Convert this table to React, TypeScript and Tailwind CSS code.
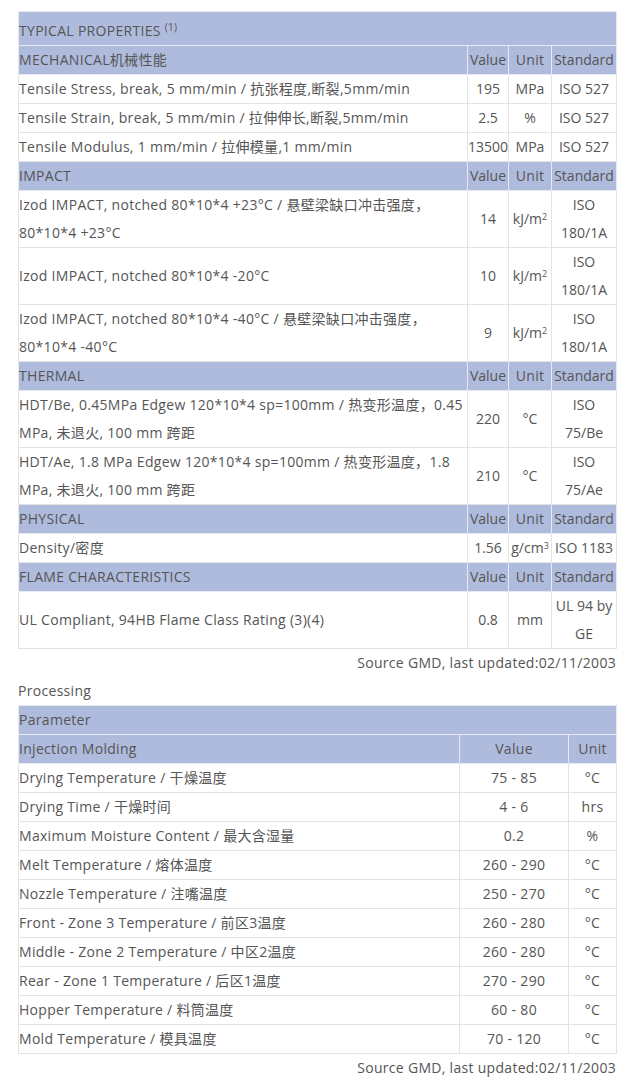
import React from "react";

type Row = { label: React.ReactNode; value: string; unit: React.ReactNode; standard: React.ReactNode };
type Section = { title: React.ReactNode; rows: Row[] };

const sections: Section[] = [
  {
    title: "MECHANICAL机械性能",
    rows: [
      { label: "Tensile Stress, break, 5 mm/min / 抗张程度,断裂,5mm/min", value: "195", unit: "MPa", standard: "ISO 527" },
      { label: "Tensile Strain, break, 5 mm/min / 拉伸伸长,断裂,5mm/min", value: "2.5", unit: "%", standard: "ISO 527" },
      { label: "Tensile Modulus, 1 mm/min / 拉伸模量,1 mm/min", value: "13500", unit: "MPa", standard: "ISO 527" },
    ],
  },
  {
    title: "IMPACT",
    rows: [
      {
        label: (<>Izod IMPACT, notched 80*10*4 +23°C / 悬壁梁缺口冲击强度，<br />80*10*4 +23°C</>),
        value: "14",
        unit: (<>kJ/m<sup className="text-[9px]">2</sup></>),
        standard: (<>ISO<br />180/1A</>),
      },
      {
        label: "Izod IMPACT, notched 80*10*4 -20°C",
        value: "10",
        unit: (<>kJ/m<sup className="text-[9px]">2</sup></>),
        standard: (<>ISO<br />180/1A</>),
      },
      {
        label: (<>Izod IMPACT, notched 80*10*4 -40°C / 悬壁梁缺口冲击强度，<br />80*10*4 -40°C</>),
        value: "9",
        unit: (<>kJ/m<sup className="text-[9px]">2</sup></>),
        standard: (<>ISO<br />180/1A</>),
      },
    ],
  },
  {
    title: "THERMAL",
    rows: [
      {
        label: (<>HDT/Be, 0.45MPa Edgew 120*10*4 sp=100mm / 热变形温度，0.45<br />MPa, 未退火, 100 mm 跨距</>),
        value: "220",
        unit: "°C",
        standard: (<>ISO<br />75/Be</>),
      },
      {
        label: (<>HDT/Ae, 1.8 MPa Edgew 120*10*4 sp=100mm / 热变形温度，1.8<br />MPa, 未退火, 100 mm 跨距</>),
        value: "210",
        unit: "°C",
        standard: (<>ISO<br />75/Ae</>),
      },
    ],
  },
  {
    title: "PHYSICAL",
    rows: [
      { label: "Density/密度", value: "1.56", unit: (<>g/cm<sup className="text-[9px]">3</sup></>), standard: "ISO 1183" },
    ],
  },
  {
    title: "FLAME CHARACTERISTICS",
    rows: [
      { label: "UL Compliant, 94HB Flame Class Rating (3)(4)", value: "0.8", unit: "mm", standard: (<>UL 94 by<br />GE</>) },
    ],
  },
];

const processing: [string, string, string][] = [
  ["Drying Temperature / 干燥温度", "75 - 85", "°C"],
  ["Drying Time / 干燥时间", "4 - 6", "hrs"],
  ["Maximum Moisture Content / 最大含湿量", "0.2", "%"],
  ["Melt Temperature / 熔体温度", "260 - 290", "°C"],
  ["Nozzle Temperature / 注嘴温度", "250 - 270", "°C"],
  ["Front - Zone 3 Temperature / 前区3温度", "260 - 280", "°C"],
  ["Middle - Zone 2 Temperature / 中区2温度", "260 - 280", "°C"],
  ["Rear - Zone 1 Temperature / 后区1温度", "270 - 290", "°C"],
  ["Hopper Temperature / 料筒温度", "60 - 80", "°C"],
  ["Mold Temperature / 模具温度", "70 - 120", "°C"],
];

const head = "bg-[#afbbdc] border border-[#e6e9f2] p-0 font-normal";
const cell = "border border-[#e3e3e3] p-0";

export default function App() {
  return (
    <div
      className="pl-[18px] pr-[1px] pt-[11px] text-[14px] leading-[28px] tracking-[0.3px] text-[#555]"
      style={{ fontFamily: '"Open Sans", "Noto Sans CJK SC", sans-serif' }}
    >
      <table className="w-[598px] table-fixed border-collapse border border-[#222]">
        <colgroup>
          <col className="w-[449px]" />
          <col className="w-[41px]" />
          <col className="w-[43px]" />
          <col className="w-[65px]" />
        </colgroup>
        <tbody>
          <tr>
            <td colSpan={4} className={`${head} text-left pt-[5px]`}>
              TYPICAL PROPERTIES <sup className="text-[10px]">(1)</sup>
            </td>
          </tr>
          {sections.map((s, i) => (
            <React.Fragment key={i}>
              <tr>
                <td className={`${head} text-left`}>{s.title}</td>
                <td className={`${head} text-center tracking-normal`}>Value</td>
                <td className={`${head} text-center`}>Unit</td>
                <td className={`${head} text-center tracking-normal`}>Standard</td>
              </tr>
              {s.rows.map((r, j) => (
                <tr key={j}>
                  <td className={`${cell} text-left align-middle`}>{r.label}</td>
                  <td className={`${cell} text-center align-middle tracking-normal`}>{r.value}</td>
                  <td className={`${cell} text-center align-middle whitespace-nowrap tracking-normal`}>{r.unit}</td>
                  <td className={`${cell} text-center align-middle tracking-normal`}>{r.standard}</td>
                </tr>
              ))}
            </React.Fragment>
          ))}
        </tbody>
      </table>
      <p className="text-right">Source GMD, last updated:02/11/2003</p>
      <p>Processing</p>
      <table className="w-[598px] table-fixed border-collapse border border-[#222]">
        <colgroup>
          <col className="w-[441px]" />
          <col className="w-[109px]" />
          <col className="w-[48px]" />
        </colgroup>
        <tbody>
          <tr>
            <td colSpan={3} className={`${head} text-left`}>Parameter</td>
          </tr>
          <tr>
            <td className={`${head} text-left`}>Injection Molding</td>
            <td className={`${head} text-center`}>Value</td>
            <td className={`${head} text-center`}>Unit</td>
          </tr>
          {processing.map(([p, v, u], i) => (
            <tr key={i}>
              <td className={`${cell} text-left`}>{p}</td>
              <td className={`${cell} text-center`}>{v}</td>
              <td className={`${cell} text-center`}>{u}</td>
            </tr>
          ))}
        </tbody>
      </table>
      <p className="text-right">Source GMD, last updated:02/11/2003</p>
    </div>
  );
}
